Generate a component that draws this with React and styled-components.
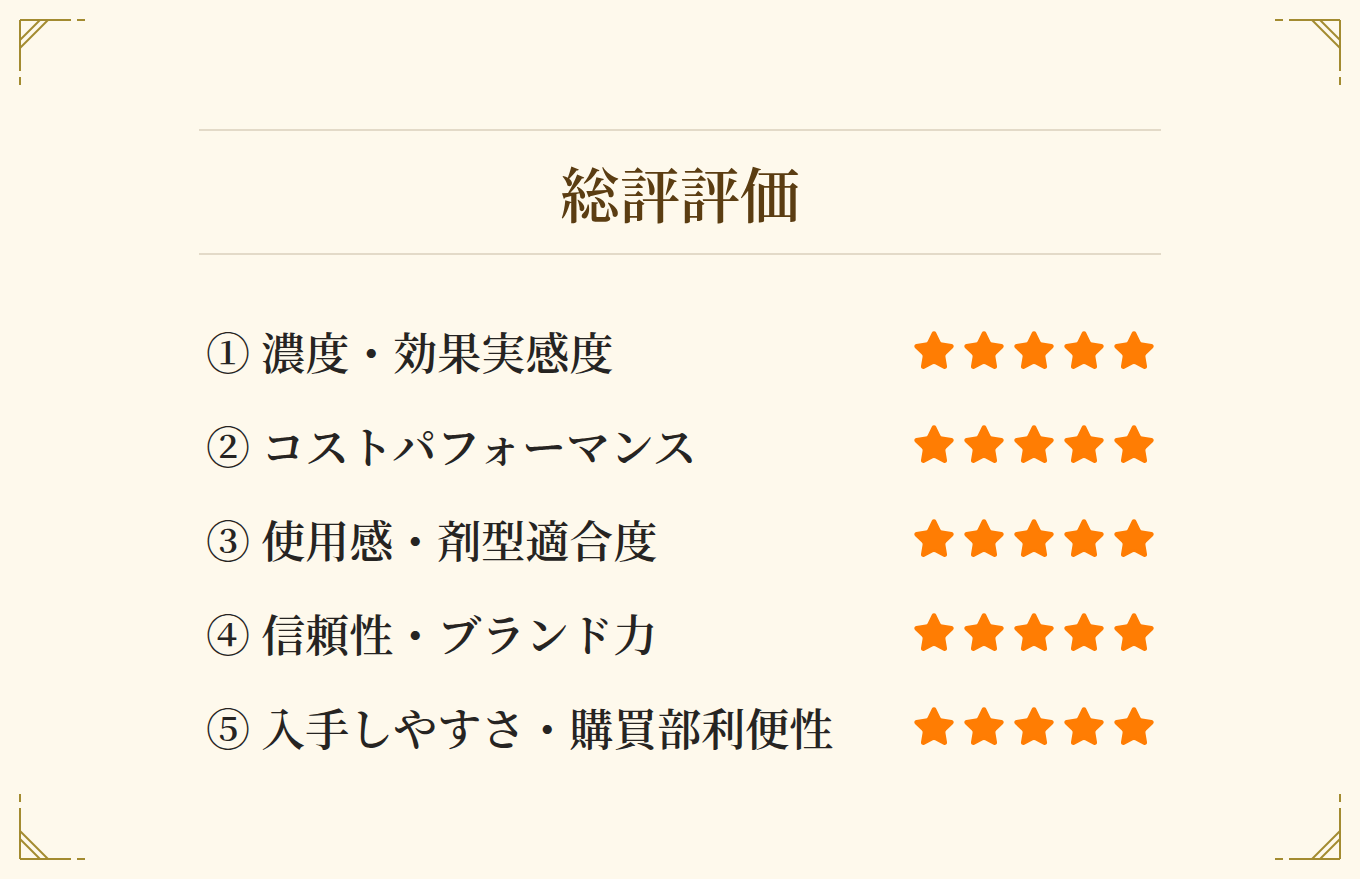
import React from 'react';
import styled, { createGlobalStyle } from 'styled-components';
import { Star } from 'lucide-react';

const GlobalStyle = createGlobalStyle`
  html, body {
    margin: 0;
    padding: 0;
    background: #fef9ec;
  }
  body {
    font-family: "Noto Serif CJK JP", "Liberation Serif", "Noto Sans CJK JP", serif;
  }
`;

const Page = styled.div`
  position: relative;
  width: 1360px;
  height: 879px;
  background: #fef9ec;
  overflow: hidden;
`;

const Corner = styled.svg`
  position: absolute;
  width: 90px;
  height: 90px;
  ${props => props.pos.includes('top') ? 'top: 0;' : 'bottom: 0;'}
  ${props => props.pos.includes('left') ? 'left: 0;' : 'right: 0;'}
  transform: scale(${props => props.pos.includes('right') ? -1 : 1}, ${props => props.pos.includes('bottom') ? -1 : 1});
`;

const Content = styled.main`
  width: 962px;
  margin: 0 auto;
  padding-top: 129px;
`;

const Header = styled.header`
  border-top: 2px solid #e3dac8;
  border-bottom: 2px solid #e3dac8;
  height: 122px;
  display: flex;
  align-items: center;
  justify-content: center;
`;

const Title = styled.h1`
  margin: 0;
  font-size: 60px;
  font-weight: 600;
  color: #5b3d12;
  letter-spacing: 0;
  line-height: 1;
`;

const List = styled.ul`
  list-style: none;
  margin: 49px 0 0;
  padding: 0;
`;

const Row = styled.li`
  height: 94px;
  display: flex;
  align-items: center;
  justify-content: space-between;
  padding: 0 5px 0 7px;
`;

const Label = styled.span`
  font-size: 44px;
  font-weight: 600;
  color: #262422;
  line-height: 1;
  white-space: nowrap;
`;

const Stars = styled.div`
  display: flex;
  gap: 6px;
  color: #ff7d03;
`;

const CornerMark = ({ pos }) => (
  <Corner pos={pos} viewBox="0 0 90 90">
    <g stroke="#a38b30" strokeWidth="2" fill="none">
      <line x1="20" y1="20" x2="71" y2="20" />
      <line x1="77" y1="20" x2="85" y2="20" />
      <line x1="20" y1="20" x2="20" y2="71" />
      <line x1="20" y1="77" x2="20" y2="85" />
      <line x1="40" y1="20" x2="20" y2="40" />
      <line x1="48" y1="20" x2="20" y2="48" />
    </g>
  </Corner>
);

const items = [
  '① 濃度・効果実感度',
  '② コストパフォーマンス',
  '③ 使用感・剤型適合度',
  '④ 信頼性・ブランド力',
  '⑤ 入手しやすさ・購買部利便性',
];

export default function App() {
  return (
    <>
      <GlobalStyle />
      <Page>
        <CornerMark pos="top-left" />
        <CornerMark pos="top-right" />
        <CornerMark pos="bottom-left" />
        <CornerMark pos="bottom-right" />
        <Content>
          <Header>
            <Title>総評評価</Title>
          </Header>
          <List>
            {items.map(text => (
              <Row key={text}>
                <Label>{text}</Label>
                <Stars>
                  {[0, 1, 2, 3, 4].map(i => (
                    <Star key={i} size={44} fill="currentColor" strokeWidth={1.5} />
                  ))}
                </Stars>
              </Row>
            ))}
          </List>
        </Content>
      </Page>
    </>
  );
}
